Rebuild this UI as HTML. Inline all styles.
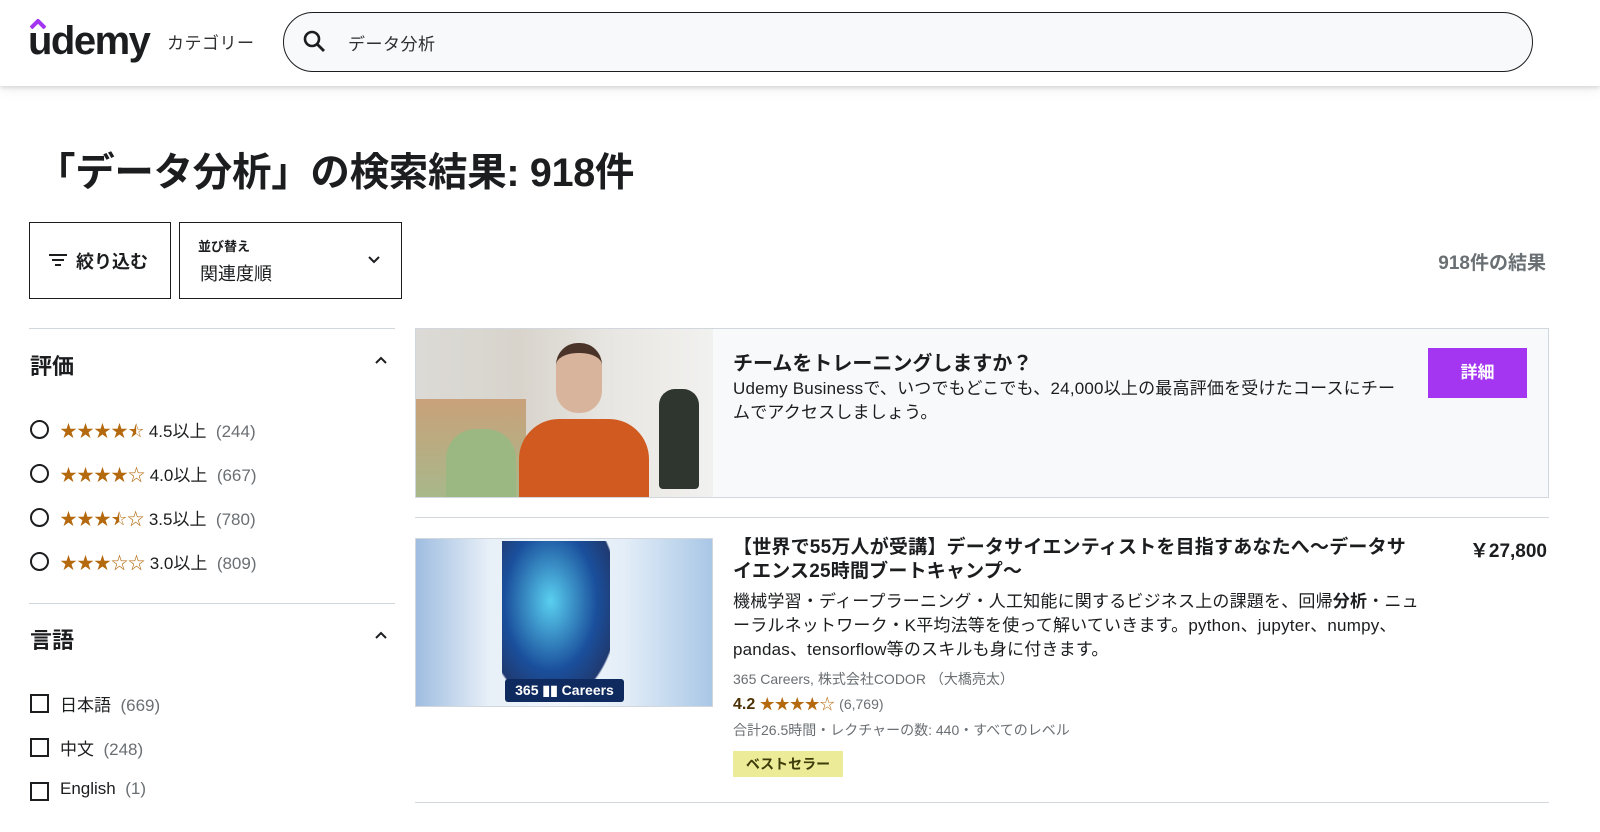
<!DOCTYPE html>
<html><head><meta charset="utf-8"><style>
*{box-sizing:border-box;margin:0;padding:0}
body{width:1600px;height:832px;overflow:hidden;background:#fff;font-family:"Liberation Sans","Noto Sans CJK JP",sans-serif;color:#1c1d1f;position:relative}
.a{position:absolute;white-space:nowrap}
.hdr{position:absolute;left:0;top:0;width:1600px;height:86px;background:#fff;box-shadow:0 2px 4px rgba(0,0,0,.12),0 4px 12px rgba(0,0,0,.06)}
.star{color:#b4690e}
.gray{color:#6a6f73}
.radio{position:absolute;left:30px;width:19px;height:19px;border:2px solid #1c1d1f;border-radius:50%}
.cb{position:absolute;left:30px;width:19px;height:19px;border:2px solid #1c1d1f}
.hr{position:absolute;height:1px;background:#d1d7dc}
</style></head><body>
<div class="hdr">
 <div class="a" style="left:28px;top:19px;font-size:40px;font-weight:bold;letter-spacing:-1.5px;color:#1c1d1f">udemy</div>
 <svg class="a" style="left:30px;top:19px" width="16" height="10"><path d="M1 9 L8 2 L15 9" fill="none" stroke="#a435f0" stroke-width="4"/></svg>
 <div class="a" style="left:167px;top:29px;font-size:17px;color:#2d2f31;letter-spacing:0.5px">カテゴリー</div>
 <div class="a" style="left:283px;top:12px;width:1250px;height:60px;border:1px solid #1c1d1f;border-radius:30px;background:#f7f9fa"></div>
 <svg class="a" style="left:302px;top:29px" width="24" height="24"><circle cx="10" cy="10" r="7" fill="none" stroke="#1c1d1f" stroke-width="2.6"/><path d="M15 15 L22 22" stroke="#1c1d1f" stroke-width="2.8"/></svg>
 <div class="a" style="left:348px;top:30px;font-size:17px;color:#2d2f31;letter-spacing:0.5px">データ分析</div>
</div>
<div class="a" style="left:36px;top:141px;font-size:39.5px;font-weight:bold;letter-spacing:-0.3px">「データ分析」の検索結果: 918件</div>

<div class="a" style="left:29px;top:222px;width:142px;height:77px;border:1px solid #1c1d1f"></div>
<svg class="a" style="left:48px;top:252px" width="20" height="16"><path d="M1 3h18M4 8h12M7 13h6" stroke="#1c1d1f" stroke-width="2"/></svg>
<div class="a" style="left:76px;top:248px;font-size:18px;font-weight:bold">絞り込む</div>
<div class="a" style="left:179px;top:222px;width:223px;height:77px;border:1px solid #1c1d1f"></div>
<div class="a" style="left:198px;top:236px;font-size:13px;font-weight:bold">並び替え</div>
<div class="a" style="left:200px;top:260px;font-size:18px">関連度順</div>
<svg class="a" style="left:367px;top:255px" width="14" height="10"><path d="M2 2l5 5 5-5" fill="none" stroke="#1c1d1f" stroke-width="2"/></svg>
<div class="a" style="right:54px;top:248px;font-size:19px;font-weight:bold;color:#6a6f73">918件の結果</div>

<div class="hr" style="left:29px;top:328px;width:366px"></div>
<div class="a" style="left:30px;top:349px;font-size:22px;font-weight:bold">評価</div>
<svg class="a" style="left:374px;top:355px" width="14" height="10"><path d="M2 8l5-5 5 5" fill="none" stroke="#1c1d1f" stroke-width="2"/></svg>
<div class="radio" style="top:420px"></div><div class="a" style="left:60px;top:417px;font-size:17px"><span class="star">★★★★⯪</span> 4.5以上 &nbsp;<span class="gray">(244)</span></div>
<div class="radio" style="top:464px"></div><div class="a" style="left:60px;top:461px;font-size:17px"><span class="star">★★★★☆</span> 4.0以上 &nbsp;<span class="gray">(667)</span></div>
<div class="radio" style="top:508px"></div><div class="a" style="left:60px;top:505px;font-size:17px"><span class="star">★★★⯪☆</span> 3.5以上 &nbsp;<span class="gray">(780)</span></div>
<div class="radio" style="top:552px"></div><div class="a" style="left:60px;top:549px;font-size:17px"><span class="star">★★★☆☆</span> 3.0以上 &nbsp;<span class="gray">(809)</span></div>
<div class="hr" style="left:29px;top:603px;width:366px"></div>
<div class="a" style="left:30px;top:623px;font-size:22px;font-weight:bold">言語</div>
<svg class="a" style="left:374px;top:630px" width="14" height="10"><path d="M2 8l5-5 5 5" fill="none" stroke="#1c1d1f" stroke-width="2"/></svg>
<div class="cb" style="top:694px"></div><div class="a" style="left:60px;top:691px;font-size:17px">日本語 &nbsp;<span class="gray">(669)</span></div>
<div class="cb" style="top:738px"></div><div class="a" style="left:60px;top:735px;font-size:17px">中文 &nbsp;<span class="gray">(248)</span></div>
<div class="cb" style="top:782px"></div><div class="a" style="left:60px;top:779px;font-size:17px">English &nbsp;<span class="gray">(1)</span></div>

<div class="a" style="left:415px;top:328px;width:1134px;height:170px;border:1px solid #d1d7dc;background:#f7f9fa"></div>
<div class="a" style="left:416px;top:329px;width:297px;height:168px;overflow:hidden;background:linear-gradient(90deg,#dcdad6 0,#d8d4cc 35%,#e8e6e2 65%,#f1f1ef 100%)">
 <div class="a" style="left:0;top:70px;width:110px;height:98px;background:linear-gradient(#c9a17a,#a8b88a)"></div>
 <div class="a" style="left:30px;top:100px;width:70px;height:68px;background:#9cb882;border-radius:30px 30px 0 0"></div>
 <div class="a" style="left:103px;top:90px;width:130px;height:78px;background:#d05a1f;border-radius:40px 40px 0 0"></div>
 <div class="a" style="left:140px;top:14px;width:46px;height:70px;background:#d8b49c;border-radius:22px;border-top:10px solid #4a3328"></div>
 <div class="a" style="left:243px;top:60px;width:40px;height:100px;background:#2f3630;border-radius:16px 16px 4px 4px"></div>
</div>
<div class="a" style="left:733px;top:347px;font-size:20px;font-weight:bold">チームをトレーニングしますか？</div>
<div class="a" style="left:733px;top:377px;font-size:17px;line-height:24px;white-space:normal;width:672px;letter-spacing:0.2px">Udemy Businessで、いつでもどこでも、24,000以上の最高評価を受けたコースにチームでアクセスしましょう。</div>
<div class="a" style="left:1428px;top:348px;width:99px;height:50px;background:#a435f0;color:#fff;font-size:17px;font-weight:bold;text-align:center;line-height:50px">詳細</div>

<div class="hr" style="left:415px;top:517px;width:1134px"></div>
<div class="a" style="left:415px;top:538px;width:298px;height:169px;border:1px solid #d1d7dc;overflow:hidden;background:linear-gradient(90deg,#9fbde0,#e8f0f8 25%,#f0f5fb 50%,#e4eef8 70%,#a9c7e6)">
 <div class="a" style="left:86px;top:2px;width:108px;height:150px;background:radial-gradient(ellipse at 45% 40%,#5ad0f0,#1a4f9c 55%,#203a70 80%,transparent 82%)"></div>
 <div class="a" style="left:89px;top:140px;width:119px;height:23px;background:#0e2a5e;border-radius:3px;color:#fff;font-size:14px;font-weight:bold;text-align:center;line-height:23px">365 ▮▮ Careers</div>
</div>
<div class="a" style="left:733px;top:536px;font-size:19px;font-weight:bold;line-height:24px;white-space:normal;width:688px;letter-spacing:0.2px">【世界で55万人が受講】データサイエンティストを目指すあなたへ〜データサイエンス25時間ブートキャンプ〜</div>
<div class="a" style="right:53px;top:536px;font-size:19px;font-weight:bold">￥27,800</div>
<div class="a" style="left:733px;top:590px;font-size:17px;line-height:24px;white-space:normal;width:690px;color:#1c1d1f;letter-spacing:0.2px">機械学習・ディープラーニング・人工知能に関するビジネス上の課題を、回帰<b>分析</b>・ニューラルネットワーク・K平均法等を使って解いていきます。python、jupyter、numpy、pandas、tensorflow等のスキルも身に付きます。</div>
<div class="a gray" style="left:733px;top:669px;font-size:14px">365 Careers, 株式会社CODOR （大橋亮太）</div>
<div class="a" style="left:733px;top:693px;font-size:16px"><b style="color:#4d3105">4.2</b> <span class="star" style="font-size:15px">★★★★☆</span> <span class="gray" style="font-size:14px">(6,769)</span></div>
<div class="a gray" style="left:733px;top:720px;font-size:14px">合計26.5時間・レクチャーの数: 440・すべてのレベル</div>
<div class="a" style="left:733px;top:751px;width:110px;height:26px;background:#eceb98;color:#3d3c0a;font-size:14px;font-weight:bold;text-align:center;line-height:26px">ベストセラー</div>
<div class="hr" style="left:415px;top:802px;width:1134px"></div>
</body></html>
